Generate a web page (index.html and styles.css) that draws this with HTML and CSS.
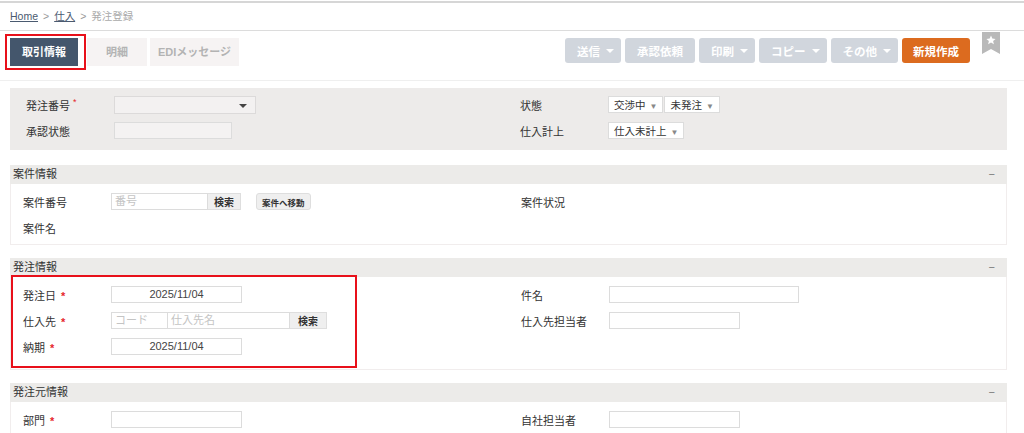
FILE: index.html
```html
<!DOCTYPE html>
<html lang="ja">
<head>
    <meta charset="UTF-8">
    <title>発注登録</title>
    <link rel="stylesheet" href="styles.css">
</head>
<body>
    <div class="crumbs">
        <a href="#">Home</a><span class="sep">&gt;</span><a href="#">仕入</a><span class="sep">&gt;</span><span class="here">発注登録</span>
    </div>

    <div class="toolbar">
        <div class="tabs">
            <span class="tab tab-on">取引情報</span>
            <span class="tab tab-meisai">明細</span>
            <span class="tab tab-edi">EDIメッセージ</span>
            <span class="mark mark-tab"></span>
        </div>
        <div class="actions">
            <button class="btn btn-drop">送信<i class="caret"></i></button>
            <button class="btn">承認依頼</button>
            <button class="btn btn-drop">印刷<i class="caret"></i></button>
            <button class="btn btn-drop">コピー<i class="caret"></i></button>
            <button class="btn btn-drop">その他<i class="caret"></i></button>
            <button class="btn btn-new">新規作成</button>
            <svg class="bookmark" width="18" height="22" viewBox="0 0 18 22">
                <polygon points="0,0 18,0 18,22 9,17 0,22" fill="#b9b9b9"/>
                <polygon points="9,3.5 10.3,6.6 13.6,6.9 11.1,9 11.9,12.3 9,10.5 6.1,12.3 6.9,9 4.4,6.9 7.7,6.6" fill="#fff"/>
            </svg>
        </div>
    </div>

    <div class="content">
        <div class="head-panel">
            <div class="col">
                <div class="row">
                    <label>発注番号<span class="req-dot">*</span></label>
                    <div class="combo"><span class="combo-arrow"></span></div>
                </div>
                <div class="row">
                    <label>承認状態</label>
                    <div class="box box-gray"></div>
                </div>
            </div>
            <div class="col">
                <div class="row">
                    <label>状態</label>
                    <div class="pick-group">
                        <span class="pick">交渉中<i>▼</i></span>
                        <span class="pick">未発注<i>▼</i></span>
                    </div>
                </div>
                <div class="row">
                    <label>仕入計上</label>
                    <div class="pick-group">
                        <span class="pick">仕入未計上<i>▼</i></span>
                    </div>
                </div>
            </div>
        </div>

        <div class="sec">
            <div class="sec-head">案件情報<span class="fold">−</span></div>
            <div class="sec-body">
                <div class="col">
                    <div class="row">
                        <label>案件番号</label>
                        <div class="field">
                            <span class="box box-num ph">番号</span><button class="mini">検索</button>
                            <button class="mini mini-move">案件へ移動</button>
                        </div>
                    </div>
                    <div class="row">
                        <label>案件名</label>
                    </div>
                </div>
                <div class="col">
                    <div class="row">
                        <label>案件状況</label>
                    </div>
                </div>
            </div>
        </div>

        <div class="sec">
            <div class="sec-head">発注情報<span class="fold">−</span></div>
            <div class="sec-body sec-body-tall">
                <div class="col">
                    <div class="row">
                        <label>発注日<span class="req">*</span></label>
                        <span class="box box-date">2025/11/04</span>
                    </div>
                    <div class="row">
                        <label>仕入先<span class="req">*</span></label>
                        <div class="field">
                            <span class="box box-code ph">コード</span><span class="box box-name ph">仕入先名</span><button class="mini mini-wide">検索</button>
                        </div>
                    </div>
                    <div class="row">
                        <label>納期<span class="req">*</span></label>
                        <span class="box box-date">2025/11/04</span>
                    </div>
                    <span class="mark mark-order"></span>
                </div>
                <div class="col">
                    <div class="row">
                        <label>件名</label>
                        <span class="box box-wide"></span>
                    </div>
                    <div class="row">
                        <label>仕入先担当者</label>
                        <span class="box box-date"></span>
                    </div>
                </div>
            </div>
        </div>

        <div class="sec">
            <div class="sec-head">発注元情報<span class="fold">−</span></div>
            <div class="sec-body">
                <div class="col">
                    <div class="row">
                        <label>部門<span class="req">*</span></label>
                        <span class="box box-date"></span>
                    </div>
                </div>
                <div class="col">
                    <div class="row">
                        <label>自社担当者</label>
                        <span class="box box-date"></span>
                    </div>
                </div>
            </div>
        </div>
    </div>
</body>
</html>
```

FILE: styles.css
```css
body {
    margin: 0;
    padding-top: 1px;
    font-family: "Liberation Sans", "Noto Sans CJK JP", sans-serif;
    font-size: 11px;
    color: #333;
    background: #fff;
    overflow: hidden;
}

.crumbs {
    border-top: 2px solid #d6d6d6;
    border-bottom: 1px solid #dcdcdc;
    height: 27px;
    line-height: 26px;
    padding-left: 10px;
    font-size: 10.5px;
    color: #999;
}

.crumbs a {
    color: #4a5a70;
}

.crumbs .sep {
    margin: 0 5px;
    color: #999;
}

.crumbs .here {
    color: #aaa;
}

.toolbar {
    display: flex;
    justify-content: space-between;
    height: 49px;
    border-bottom: 1px solid #efefef;
}

.tabs {
    position: relative;
    display: flex;
    padding: 7px 0 0 10px;
}

.tab {
    height: 28px;
    line-height: 28px;
    font-weight: bold;
    font-size: 11px;
    text-align: center;
    background: #f6f3f3;
    color: #b3b3b3;
}

.tab-on {
    width: 68px;
    background: #44566c;
    color: #fff;
}

.tab-meisai {
    width: 60px;
    margin-left: 9px;
}

.tab-edi {
    width: 89px;
    margin-left: 3px;
}

.mark {
    position: absolute;
    border: 2px solid #e8101a;
    pointer-events: none;
}

.mark-tab {
    left: 5px;
    top: 3px;
    width: 77px;
    height: 32px;
}

.actions {
    display: flex;
    align-items: flex-start;
    gap: 4px;
    padding: 7px 24px 0 0;
}

.btn {
    height: 25px;
    padding: 0 12px;
    border: none;
    border-radius: 3px;
    background: #d1d6dd;
    color: #fff;
    font-family: inherit;
    font-size: 11.5px;
    font-weight: bold;
    display: flex;
    align-items: center;
}

.btn-drop {
    padding: 0 7px 0 12px;
}

.btn-new {
    background: #dc6b1f;
    padding: 0 11px;
}

.caret {
    display: inline-block;
    margin-left: 6px;
    border-left: 4px solid transparent;
    border-right: 4px solid transparent;
    border-top: 4px solid #fff;
}

.bookmark {
    margin: -6px 0 0 8px;
}

.content {
    padding: 7px 17px 0 10px;
}

.head-panel {
    display: grid;
    grid-template-columns: 498px 1fr;
    background: #edebea;
    padding: 8px 0 11px;
}

.head-panel .col {
    padding-left: 16px;
}

.head-panel .col + .col {
    padding-left: 12px;
}

.head-panel .row label {
    width: 88px;
}

.col {
    position: relative;
    display: flex;
    flex-direction: column;
    gap: 9px;
    padding-left: 12px;
}

.row {
    display: flex;
    align-items: center;
    height: 17px;
}

.row label {
    width: 88px;
    flex-shrink: 0;
    color: #333;
}

.req-dot {
    color: #e5262b;
    font-size: 9px;
    vertical-align: 5px;
    margin-left: 3px;
}

.req {
    color: #e5262b;
    font-weight: bold;
    margin-left: 5px;
}

.combo {
    position: relative;
    width: 140px;
    height: 16px;
    border: 1px solid #dcdada;
    background: #f3f1f1;
}

.combo-arrow {
    position: absolute;
    right: 8px;
    top: 7px;
    border-left: 4px solid transparent;
    border-right: 4px solid transparent;
    border-top: 4px solid #444;
}

.box {
    display: inline-block;
    box-sizing: border-box;
    height: 17px;
    line-height: 15px;
    border: 1px solid #dcdcdc;
    background: #fff;
    font-size: 11px;
    vertical-align: top;
}

.box-gray {
    width: 118px;
    background: #f4f2f2;
}

.box-date {
    width: 131px;
    text-align: center;
    color: #444;
}

.box-wide {
    width: 190px;
}

.box-num {
    width: 97px;
}

.box-code {
    width: 57px;
}

.box-name {
    width: 122px;
    border-left: none;
}

.ph {
    color: #c4c4c4;
    padding-left: 3px;
}

.pick-group {
    display: flex;
    gap: 1px;
}

.pick {
    height: 17px;
    line-height: 16px;
    box-sizing: border-box;
    padding: 0 5px 0 5px;
    border: 1px solid #dcdcdc;
    background: #fff;
    font-size: 10.5px;
}

.pick i {
    font-style: normal;
    font-size: 8px;
    color: #888;
    margin-left: 4px;
}

.field {
    display: flex;
    align-items: center;
}

.mini {
    height: 17px;
    padding: 0 6px;
    border: 1px solid #dedede;
    border-left: none;
    background: #efefef;
    font-family: inherit;
    font-size: 10px;
    font-weight: bold;
    color: #333;
}

.mini-wide {
    padding: 0 8px;
}

.mini-move {
    margin-left: 15px;
    border-left: 1px solid #dedede;
    border-radius: 3px;
    font-size: 8.5px;
    padding: 0 5px;
}

.sec {
    margin-top: 15px;
}

.sec + .sec {
    margin-top: 13px;
}

.sec-head {
    display: flex;
    justify-content: space-between;
    height: 19px;
    line-height: 19px;
    padding: 0 12px 0 3px;
    background: #ecebe9;
    color: #333;
}

.fold {
    color: #777;
}

.sec-body {
    display: grid;
    grid-template-columns: 498px 1fr;
    padding: 9px 0 8px;
    border: 1px solid #f1eded;
    border-top: none;
}

.sec-body-tall {
    padding-bottom: 14px;
}

.mark-order {
    left: 0;
    top: -11px;
    width: 342px;
    height: 89px;
}
```
